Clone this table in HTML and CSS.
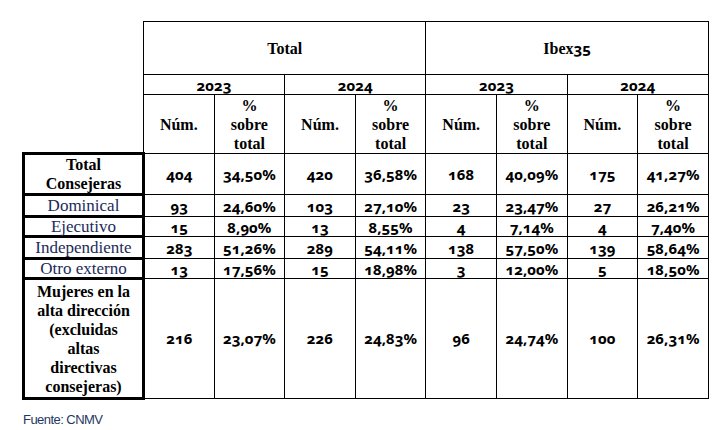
FILE: index.html
```html
<!DOCTYPE html>
<html lang="es">
<head>
<meta charset="utf-8">
<link rel="stylesheet" href="styles.css">
</head>
<body>
<div class="page">
  <table class="grid">
    <colgroup>
      <col class="c-label">
      <col span="8" class="c-data">
    </colgroup>
    <tr class="r-group">
      <td class="blank"></td>
      <th colspan="4">Total</th>
      <th colspan="4">Ibex<span class="num">35</span></th>
    </tr>
    <tr class="r-year">
      <td class="blank"></td>
      <th colspan="2" class="num">2023</th>
      <th colspan="2" class="num">2024</th>
      <th colspan="2" class="num">2023</th>
      <th colspan="2" class="num">2024</th>
    </tr>
    <tr class="r-sub">
      <td class="blank"></td>
      <th>Núm.</th><th>%<br>sobre<br>total</th>
      <th>Núm.</th><th>%<br>sobre<br>total</th>
      <th>Núm.</th><th>%<br>sobre<br>total</th>
      <th>Núm.</th><th>%<br>sobre<br>total</th>
    </tr>
    <tr class="r-total">
      <th class="label">Total<br>Consejeras</th>
      <td class="num">404</td><td class="num">34,50%</td>
      <td class="num">420</td><td class="num">36,58%</td>
      <td class="num">168</td><td class="num">40,09%</td>
      <td class="num">175</td><td class="num">41,27%</td>
    </tr>
    <tr class="r-cat r-dom">
      <td class="label cat">Dominical</td>
      <td class="num">93</td><td class="num">24,60%</td>
      <td class="num">103</td><td class="num">27,10%</td>
      <td class="num">23</td><td class="num">23,47%</td>
      <td class="num">27</td><td class="num">26,21%</td>
    </tr>
    <tr class="r-cat r-eje">
      <td class="label cat">Ejecutivo</td>
      <td class="num">15</td><td class="num">8,90%</td>
      <td class="num">13</td><td class="num">8,55%</td>
      <td class="num">4</td><td class="num">7,14%</td>
      <td class="num">4</td><td class="num">7,40%</td>
    </tr>
    <tr class="r-cat r-ind">
      <td class="label cat">Independiente</td>
      <td class="num">283</td><td class="num">51,26%</td>
      <td class="num">289</td><td class="num">54,11%</td>
      <td class="num">138</td><td class="num">57,50%</td>
      <td class="num">139</td><td class="num">58,64%</td>
    </tr>
    <tr class="r-cat r-otro">
      <td class="label cat">Otro externo</td>
      <td class="num">13</td><td class="num">17,56%</td>
      <td class="num">15</td><td class="num">18,98%</td>
      <td class="num">3</td><td class="num">12,00%</td>
      <td class="num">5</td><td class="num">18,50%</td>
    </tr>
    <tr class="r-muj">
      <th class="label">Mujeres en la<br>alta dirección<br>(excluidas<br>altas<br>directivas<br>consejeras)</th>
      <td class="num">216</td><td class="num">23,07%</td>
      <td class="num">226</td><td class="num">24,83%</td>
      <td class="num">96</td><td class="num">24,74%</td>
      <td class="num">100</td><td class="num">26,31%</td>
    </tr>
  </table>
  <p class="source">Fuente: CNMV</p>
</div>
</body>
</html>
```
FILE: styles.css
```css
html, body {
  margin: 0;
  padding: 0;
  background: #ffffff;
}

.page {
  padding: 21px 0 0 22px;
}

.grid {
  border-collapse: collapse;
  table-layout: fixed;
  width: 685px;
  font-family: "Liberation Serif", "DejaVu Serif", serif;
  font-size: 16px;
  line-height: 19px;
  color: #000000;
}

.c-label { width: 120px; }
.c-data { width: 70.6px; }

.grid th,
.grid td {
  border: 1px solid #000000;
  padding: 0;
  text-align: center;
  vertical-align: middle;
  font-weight: bold;
}

.grid .blank {
  border: none;
}

.grid .label {
  border: 3px solid #000000;
}

.grid .cat {
  font-size: 17px;
  font-weight: normal;
  color: #1c2a5a;
  line-height: 16px;
}

.num {
  font-family: "Noto Sans", "Lato", sans-serif;
  font-variant-numeric: oldstyle-nums;
  font-size: 15px;
  font-weight: bold;
}

.r-group { height: 53px; }
.r-year { height: 20px; }
.r-year th { vertical-align: bottom; line-height: 17px; }
.r-sub { height: 59px; }
.r-total { height: 41px; }
.r-dom { height: 22px; }
.r-eje { height: 20px; }
.r-ind { height: 22px; }
.r-otro { height: 20px; }
.r-muj { height: 120px; }

.r-cat td.num {
  vertical-align: middle;
  line-height: 18px;
}

.source {
  margin: 12px 0 0 1px;
  font-family: "Liberation Sans", Arial, sans-serif;
  font-size: 13px;
  letter-spacing: -0.55px;
  color: #1f3864;
}
```
